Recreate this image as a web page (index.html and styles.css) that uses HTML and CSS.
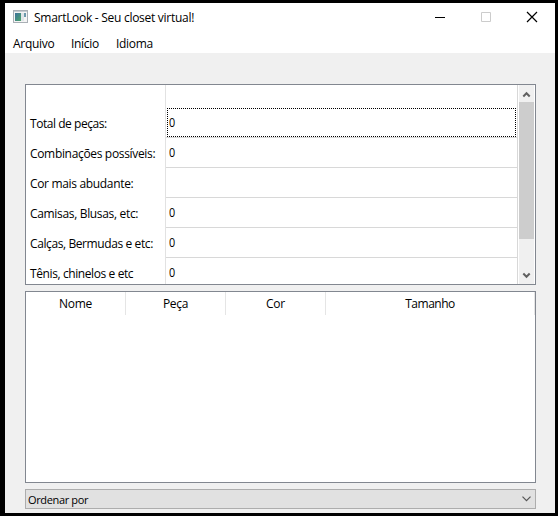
FILE: index.html
```
<!DOCTYPE html>
<html lang="pt-BR">
<head>
<meta charset="utf-8">
<title>SmartLook - Seu closet virtual!</title>
<link rel="stylesheet" href="styles.css">
</head>
<body>
<div class="window">
  <header class="titlebar">
    <svg class="app-icon" width="15" height="13" viewBox="0 0 15 13">
      <defs><linearGradient id="g" x1="0" y1="0" x2="1" y2="1"><stop offset="0" stop-color="#3d719b"/><stop offset="1" stop-color="#4ba56b"/></linearGradient></defs>
      <rect x=".5" y=".5" width="14" height="12" fill="#f4f4f4" stroke="#a9afb5"/>
      <path d="M1 1.5h13" stroke="#c4cbd1"/>
      <rect x="2" y="3" width="6" height="8" fill="url(#g)"/>
      <rect x="8" y="3" width="3" height="8" fill="#dfe4e7"/>
      <rect x="11" y="3" width="2" height="4" fill="#6d98ac"/>
    </svg>
    <h1 class="title">SmartLook - Seu closet virtual!</h1>
    <div class="controls">
      <svg width="10" height="10" viewBox="0 0 10 10"><path d="M0 5.500h10" stroke="#000"/></svg>
      <svg width="10" height="10" viewBox="0 0 10 10"><path d="M.5.5h9v9h-9z" fill="none" stroke="#ccc"/></svg>
      <svg width="10" height="10" viewBox="0 0 10 10"><path d="M0 0l10 10M10 0L0 10" stroke="#000" stroke-width="1.200"/></svg>
    </div>
  </header>
  <nav class="menu"><span class="m1">Arquivo</span><span class="m2">Início</span><span class="m3">Idioma</span></nav>
  <main class="content">
    <section class="summary">
      <div class="labels">
        <div class="label l1">Total de peças:</div>
        <div class="label">Combinações possíveis:</div>
        <div class="label">Cor mais abudante:</div>
        <div class="label">Camisas, Blusas, etc:</div>
        <div class="label l5">Calças, Bermudas e etc:</div>
        <div class="label l5">Tênis, chinelos e etc</div>
      </div>
      <div class="values">
        <div class="value"><span>0</span><svg class="focus-ring" width="349" height="29"><path d="M0 .5H349M0 28.500H349M.5 0V29M348.500 0V29"/></svg></div>
        <div class="value"><span>0</span></div>
        <div class="value"></div>
        <div class="value"><span>0</span></div>
        <div class="value"><span>0</span></div>
        <div class="value"><span>0</span></div>
      </div>
      <div class="scrollbar">
        <svg width="15" height="17" viewBox="0 0 15 17"><path d="M4.300 11.500L7.500 8.200l3.200 3.300" /></svg>
        <div class="thumb"></div>
        <svg class="down" width="15" height="17" viewBox="0 0 15 17"><path d="M4.300 6.500L7.500 9.800 10.700 6.500" /></svg>
      </div>
    </section>
    <section class="items">
      <div class="head"><span>Nome</span><span>Peça</span><span>Cor</span><span class="wide">Tamanho</span></div>
    </section>
    <div class="combo"><span>Ordenar por</span>
      <svg width="9" height="6" viewBox="0 0 9 6"><path d="M.5.7l4 4 4-4" fill="none" stroke="#555" stroke-width="1.200"/></svg>
    </div>
  </main>
</div>
</body>
</html>
```
FILE: styles.css
```
* { box-sizing: border-box; }
body {
  margin: 0;
  width: 558px;
  height: 516px;
  padding: 3px 3px 3px 5px;
  background: #000;
  color: #000;
  font: 12px "Open Sans", "Noto Sans", sans-serif;
  letter-spacing: -0.3px;
  overflow: hidden;
}
svg { display: block; }
.window { width: 550px; height: 510px; background: #f0f0f0; }
.titlebar {
  height: 30px;
  display: flex;
  align-items: flex-start;
  background: #fff;
  padding: 7px 18px 0 8px;
}
.title { margin: 0 0 0 6px; font-size: 12px; font-weight: 400; line-height: 16px; letter-spacing: -0.28px; }
.controls { display: flex; gap: 36px; margin: 2px 0 0 auto; }
.controls svg { width: 10px; overflow: visible; }
.menu {
  display: flex;
  height: 20px;
  padding-left: 8px;
  line-height: 22px;
  background: #fff;
}
.m1 { width: 58px; }
.m2 { width: 45px; }
.content { padding: 31px 19px 0 20px; }
.summary {
  display: flex;
  height: 201px;
  border: 1px solid #828790;
  background: #fff;
  overflow: hidden;
}
.labels { width: 140px; padding: 23px 0 0 4px; border-right: 1px solid #e2e2e2; }
.label { height: 30px; line-height: 31px; white-space: nowrap; letter-spacing: -0.33px; }
.l1 { letter-spacing: -0.45px; }
.l5 { letter-spacing: -0.4px; }
.values { width: 352px; padding-top: 23px; border-right: 1px solid #d8d8d8; }
.value { position: relative; height: 30px; padding-left: 3px; line-height: 29px; border-bottom: 1px solid #d8d8d8; }
.value span { display: inline-block; transform: scaleX(0.9); transform-origin: left; }
.focus-ring { position: absolute; left: 1px; top: 0; }
.focus-ring path { fill: none; stroke: #000; stroke-dasharray: 1 1; shape-rendering: crispEdges; }
.scrollbar { display: flex; flex-direction: column; width: 15px; height: 199px; margin-left: 1px; background: #f0f0f0; }
.scrollbar path { fill: none; stroke: #606060; stroke-width: 2; }
.thumb { height: 137px; background: #cdcdcd; }
.down { margin-top: auto; }
.items { height: 192px; margin-top: 6px; border: 1px solid #828790; background: #fff; }
.head { display: flex; height: 23px; line-height: 23px; text-align: center; }
.head span { width: 100px; border-right: 1px solid #e5e5e5; }
.head .wide { width: 209px; letter-spacing: -0.5px; }
.combo {
  display: flex;
  align-items: center;
  justify-content: space-between;
  height: 20px;
  margin-top: 6px;
  padding: 0 4px 0 2px;
  border: 1px solid #adadad;
  background: #e1e1e1;
}
.combo span { margin-top: 1px; font-size: 11px; line-height: 18px; letter-spacing: -0.35px; }
```
